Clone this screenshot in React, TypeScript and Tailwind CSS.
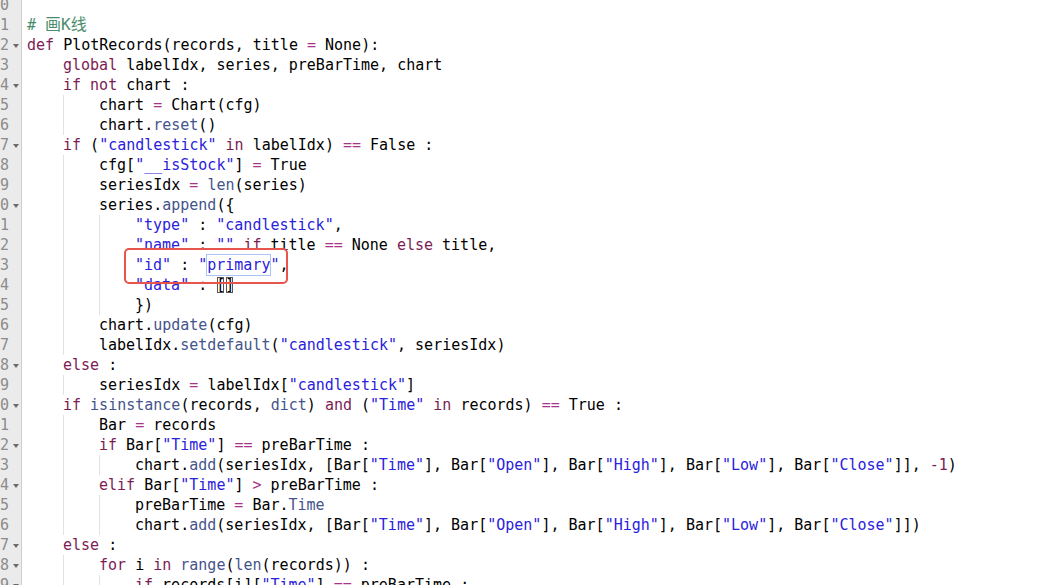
import React from "react";

// source shown in the editor (rows are cut off at both ends of the view)
const rows: { code: string; fold?: boolean }[] = [
  { code: "" },
  { code: "# 画K线" },
  { code: "def PlotRecords(records, title = None):", fold: true },
  { code: "    global labelIdx, series, preBarTime, chart" },
  { code: "    if not chart :", fold: true },
  { code: "        chart = Chart(cfg)" },
  { code: "        chart.reset()" },
  { code: '    if ("candlestick" in labelIdx) == False :', fold: true },
  { code: '        cfg["__isStock"] = True' },
  { code: "        seriesIdx = len(series)" },
  { code: "        series.append({", fold: true },
  { code: '            "type" : "candlestick",' },
  { code: '            "name" : "" if title == None else title,' },
  { code: '            "id" : "primary",' },
  { code: '            "data" : []' },
  { code: "            })" },
  { code: "        chart.update(cfg)" },
  { code: '        labelIdx.setdefault("candlestick", seriesIdx)' },
  { code: "    else :", fold: true },
  { code: '        seriesIdx = labelIdx["candlestick"]' },
  { code: '    if isinstance(records, dict) and ("Time" in records) == True :', fold: true },
  { code: "        Bar = records" },
  { code: '        if Bar["Time"] == preBarTime :', fold: true },
  { code: '            chart.add(seriesIdx, [Bar["Time"], Bar["Open"], Bar["High"], Bar["Low"], Bar["Close"]], -1)' },
  { code: '        elif Bar["Time"] > preBarTime :', fold: true },
  { code: "            preBarTime = Bar.Time" },
  { code: '            chart.add(seriesIdx, [Bar["Time"], Bar["Open"], Bar["High"], Bar["Low"], Bar["Close"]])' },
  { code: "    else :", fold: true },
  { code: "        for i in range(len(records)) :", fold: true },
  { code: '            if records[i]["Time"] == preBarTime :', fold: true },
];

const KW = new Set(["def", "global", "if", "not", "in", "else", "elif", "and", "for"]);
const BUILTIN = new Set(["len", "isinstance", "dict", "range"]);

const colors: Record<string, string> = {
  plain: "text-black",
  kw: "text-[#7c1c55]",
  str: "text-[#2a22dc]",
  fn: "text-[#45548c]",
  op: "text-[#a8348a]",
  num: "text-[#7c1c55]",
  comment: "text-[#4a8c6c]",
};

type Tok = { t: string; c: string };

const tokenize = (s: string): Tok[] => {
  const out: Tok[] = [];
  let i = 0;
  let afterDot = false;
  while (i < s.length) {
    const ch = s[i];
    if (ch === "#") {
      out.push({ t: s.slice(i), c: "comment" });
      break;
    }
    if (ch === '"') {
      const j = s.indexOf('"', i + 1);
      out.push({ t: s.slice(i, j + 1), c: "str" });
      i = j + 1;
      continue;
    }
    if (/[A-Za-z_]/.test(ch)) {
      let j = i;
      while (j < s.length && /\w/.test(s[j])) j++;
      const w = s.slice(i, j);
      let c = "plain";
      if (KW.has(w)) c = "kw";
      else if (BUILTIN.has(w) || afterDot) c = "fn";
      out.push({ t: w, c });
      afterDot = false;
      i = j;
      continue;
    }
    if (ch === "-" && /\d/.test(s[i + 1] || "")) {
      let j = i + 1;
      while (j < s.length && /\d/.test(s[j])) j++;
      out.push({ t: s.slice(i, j), c: "num" });
      i = j;
      continue;
    }
    if (ch === "=" || ch === ">") {
      const t = s[i + 1] === "=" ? ch + "=" : ch;
      out.push({ t, c: "op" });
      i += t.length;
      continue;
    }
    afterDot = ch === ".";
    out.push({ t: ch, c: "plain" });
    i++;
  }
  return out;
};

const renderTok = (tok: Tok, k: number) => {
  if (tok.t === '"primary"') {
    return (
      <span key={k} className={colors.str}>
        "
        <span className="outline outline-1 outline-[#a9c3f2] py-[1px]">primary</span>"
      </span>
    );
  }
  if (tok.c === "comment") {
    // CJK glyphs in the reference run a bit larger than the mono cell
    return (
      <span key={k} className={colors.comment}>
        # <span className="text-[16px]">画K线</span>
      </span>
    );
  }
  return (
    <span key={k} className={colors[tok.c]}>
      {tok.t}
    </span>
  );
};

const FoldArrow = () => (
  <svg width="6" height="4" viewBox="0 0 6 4" className="absolute left-[13px] top-[9px]">
    <path d="M0 0 L6 0 L3 4 Z" fill="#6b6b6b" />
  </svg>
);

const CodeLine = ({ code, row }: { code: string; row: number }) => {
  const indent = code.length - code.trimStart().length;
  const body = code.slice(indent);
  const groups = Math.floor(indent / 4);
  const toks = tokenize(body);
  return (
    <div className="flex h-[20px] items-center whitespace-pre pl-[5px]">
      {Array.from({ length: groups }).map((_, g) => (
        <span
          key={g}
          className={`inline-block h-[20px] w-[36px] ${g > 0 ? "border-l border-[#e2e2e2]" : ""}`}
        />
      ))}
      <span>
        {row === 14 ? (
          <>
            <span className={colors.str}>"data"</span>
            <span> : </span>
            <span className="outline outline-1 outline-[#555] -outline-offset-2">[</span>
            <span className="outline outline-1 outline-[#555] -outline-offset-2">]</span>
          </>
        ) : (
          toks.map(renderTok)
        )}
      </span>
    </div>
  );
};

export default function App() {
  return (
    <div
      className="relative h-[585px] w-[1047px] overflow-hidden bg-white text-[15px] leading-[20px]"
      style={{ fontFamily: '"DejaVu Sans Mono", "Noto Sans CJK SC", monospace' }}
    >
      <div className="-mt-[5px]">
        {rows.map((r, i) => (
          <div key={i} className="flex">
            <div className="relative h-[20px] w-[22px] shrink-0 border-r border-[#cfcfcf] bg-[#ebebeb]">
              <span className="absolute left-[0px] top-0 text-[#8c8c8c]">{i % 10}</span>
              {r.fold && <FoldArrow />}
            </div>
            <div className="flex-1">
              <CodeLine code={r.code} row={i} />
            </div>
          </div>
        ))}
      </div>

      {/* red annotation box over the "id" line */}
      <div className="absolute left-[124px] top-[248px] h-[36px] w-[164px] rounded-[5px] border-2 border-[#e6544c]" />
    </div>
  );
}
